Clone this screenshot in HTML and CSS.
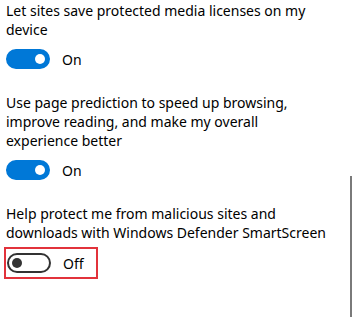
FILE: index.html
```html
<!DOCTYPE html>
<html lang="en">
<head>
    <meta charset="UTF-8">
    <meta name="viewport" content="width=device-width, initial-scale=1.0">
    <title>Privacy and services</title>
    <link rel="stylesheet" href="styles.css">
</head>
<body>
    <div class="panel">
        <div class="setting">
            <p class="label">Let sites save protected media licenses on my device</p>
            <div class="switch-row">
                <span class="toggle on"><span class="knob"></span></span>
                <span class="state">On</span>
            </div>
        </div>
        <div class="setting">
            <p class="label">Use page prediction to speed up browsing, improve reading, and make my overall experience better</p>
            <div class="switch-row">
                <span class="toggle on"><span class="knob"></span></span>
                <span class="state">On</span>
            </div>
        </div>
        <div class="setting">
            <p class="label">Help protect me from malicious sites and downloads with Windows Defender SmartScreen</p>
            <div class="switch-row highlight">
                <span class="toggle"><span class="knob"></span></span>
                <span class="state">Off</span>
            </div>
        </div>
        <div class="scrollbar"></div>
    </div>
</body>
</html>
```

FILE: styles.css
```css
body {
    margin: 0;
    padding: 0;
    background-color: #ffffff;
    font-family: 'Noto Sans', 'Open Sans', sans-serif;
    font-size: 14px;
    line-height: 19px;
    color: #000000;
}
.panel {
    position: relative;
    height: 317px;
    padding: 1px 0 0 6px;
    box-sizing: border-box;
    overflow: hidden;
}
.setting {
    margin-bottom: 24px;
}
.label {
    margin: 0;
    width: 322px;
}
.switch-row {
    display: flex;
    align-items: center;
    margin-top: 10px;
    height: 20px;
}
.toggle {
    position: relative;
    display: flex;
    align-items: center;
    width: 44px;
    height: 20px;
    box-sizing: border-box;
    border: 2px solid #333333;
    border-radius: 10px;
    padding: 0 3px;
}
.toggle .knob {
    width: 10px;
    height: 10px;
    border-radius: 50%;
    background-color: #333333;
}
.toggle.on {
    background-color: #0078d7;
    border-color: #0078d7;
    justify-content: flex-end;
}
.toggle.on .knob {
    background-color: #ffffff;
}
.state {
    margin-left: 12px;
}
.highlight {
    width: fit-content;
    margin-left: -2px;
    padding: 4px 12px 4px 1px;
    border: 2px solid #e2323b;
    margin-top: 5px;
}
.scrollbar {
    position: absolute;
    right: 0;
    top: 176px;
    width: 2px;
    height: 141px;
    background-color: #7a7a7a;
}
```
